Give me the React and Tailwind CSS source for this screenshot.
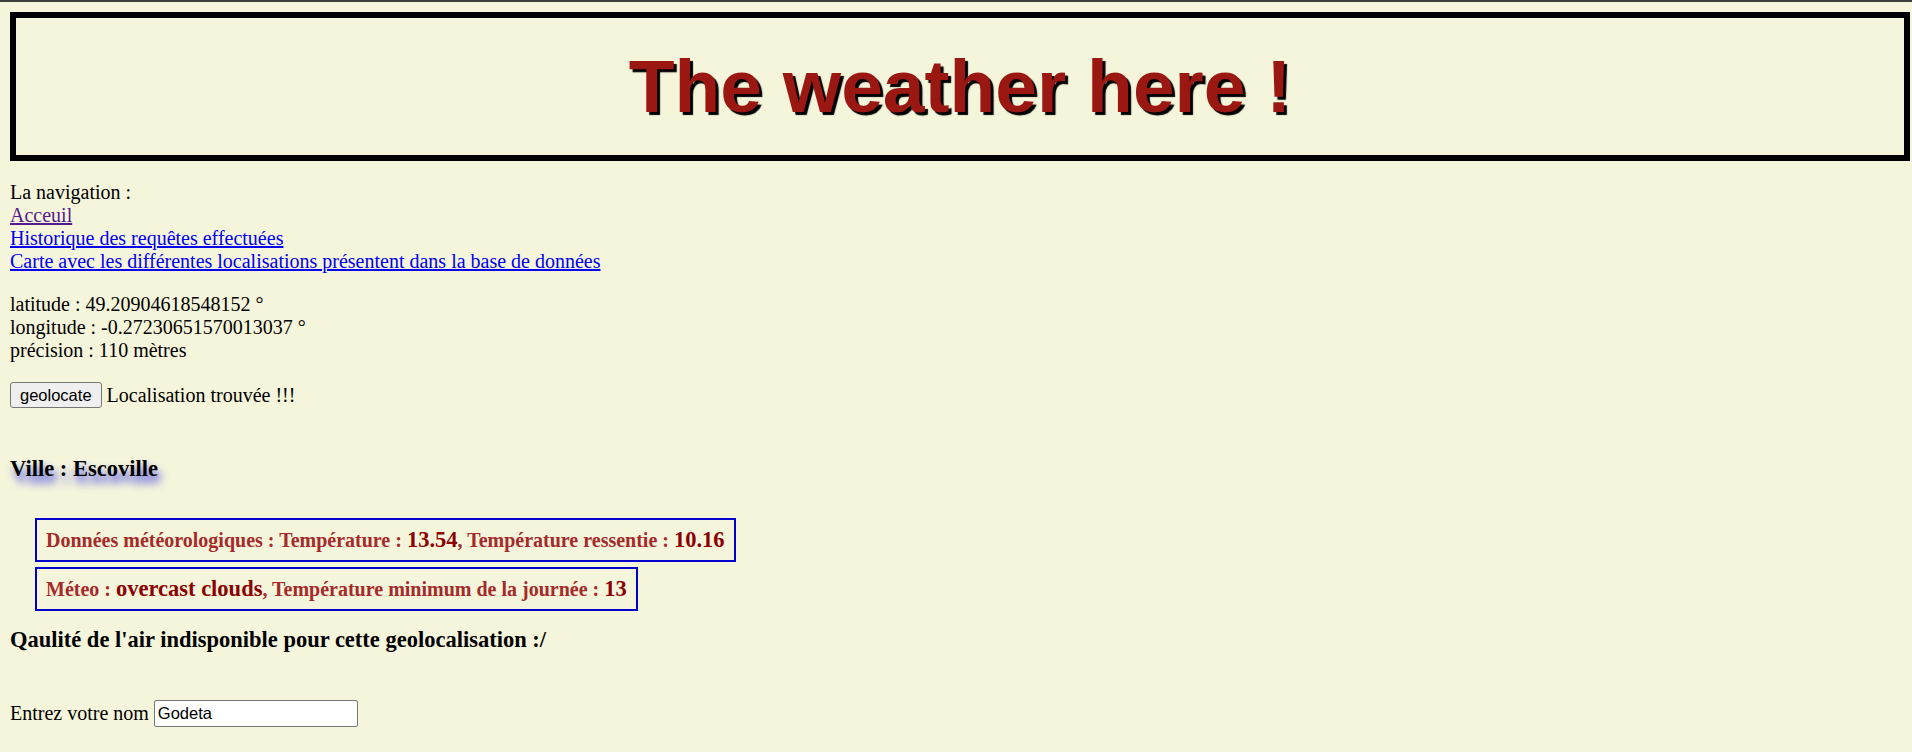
import React from 'react';

const Label = ({ children }) => (
  <span className="text-[20px] font-bold text-[#a52a2a]">{children}</span>
);

const Value = ({ children }) => (
  <span className="text-[22.5px] font-bold text-[#8b0000]">{children}</span>
);

const WeatherBox = ({ children }) => (
  <div className="h-[44px] flex items-center border-[2.5px] border-[#0000cd] px-[9px]">
    <p className="leading-[28px] whitespace-nowrap">{children}</p>
  </div>
);

export default function App() {
  return (
    <div className="min-h-screen overflow-hidden bg-[#f5f5dc] font-['Liberation_Serif','Times_New_Roman',serif] text-[20px] leading-[23px] text-black">
      <div className="h-[2px] bg-[#3c3c3c]" />
      <div className="px-[10px] pt-[10px]">
        {/* Header */}
        <header className="h-[149px] w-[1900px] border-[6px] border-black flex items-center justify-center">
          <h1 className="font-['Liberation_Sans',Arial,sans-serif] font-bold text-[75px] leading-normal text-[#9b1711] [text-shadow:3px_3px_1px_#000]">
            The weather here !
          </h1>
        </header>

        {/* Navigation */}
        <nav className="mt-[20px]">
          <p>La navigation :</p>
          <a href="#" className="block w-fit text-[#551a8b] underline">Acceuil</a>
          <a href="#" className="block w-fit text-[#0000ee] underline">Historique des requêtes effectuées</a>
          <a href="#" className="block w-fit text-[#0000ee] underline">
            Carte avec les différentes localisations présentent dans la base de données
          </a>
        </nav>

        {/* Coordinates */}
        <div className="mt-[20px]">
          <p>latitude : 49.20904618548152 °</p>
          <p>longitude : -0.27230651570013037 °</p>
          <p>précision : 110 mètres</p>
        </div>

        <div className="mt-[20px] h-[26px] flex items-center gap-[5px]">
          <button className="h-[26px] px-[9px] border border-[#767676] rounded-[3px] bg-[#efefef] font-['Liberation_Sans',Arial,sans-serif] text-[16.5px] leading-none text-black">
            geolocate
          </button>
          <span>Localisation trouvée !!!</span>
        </div>

        <h3 className="mt-[48px] text-[22.5px] leading-[25px] font-bold [text-shadow:3px_7px_8px_rgb(60,60,230)]">
          Ville : Escoville
        </h3>

        {/* Weather data */}
        <div className="mt-[37px] ml-[25px] flex flex-col items-start gap-[5px]">
          <WeatherBox>
            <Label>Données météorologiques : Température : </Label>
            <Value>13.54</Value>
            <Label>, Température ressentie : </Label>
            <Value>10.16</Value>
          </WeatherBox>
          <WeatherBox>
            <Label>Méteo : </Label>
            <Value>overcast clouds</Value>
            <Label>, Température minimum de la journée : </Label>
            <Value>13</Value>
          </WeatherBox>
        </div>

        <h3 className="mt-[16px] text-[22.5px] leading-[26px] font-bold">
          Qaulité de l'air indisponible pour cette geolocalisation :/
        </h3>

        <div className="mt-[47px] h-[27px] flex items-center gap-[5px]">
          <label htmlFor="nom">Entrez votre nom</label>
          <input
            id="nom"
            type="text"
            defaultValue="Godeta"
            className="w-[204px] h-[27px] border border-[#767676] rounded-[2px] bg-white px-[3px] font-['Liberation_Sans',Arial,sans-serif] text-[16.5px] text-black outline-none"
          />
        </div>
      </div>
    </div>
  );
}
